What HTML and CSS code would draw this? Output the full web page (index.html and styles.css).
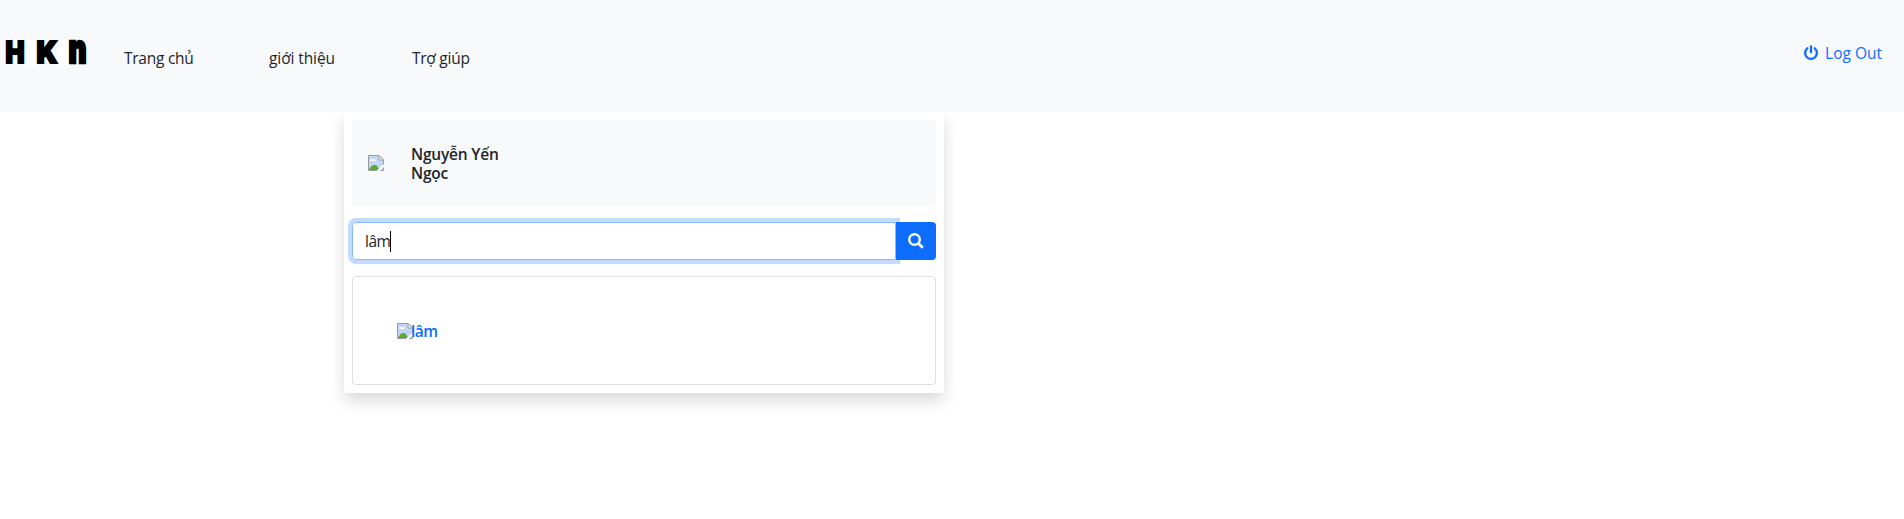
FILE: index.html
```html
<!DOCTYPE html>
<html lang="vi">
<head>
<meta charset="utf-8">
<title>HKN</title>
<link rel="stylesheet" href="styles.css">
</head>
<body>
<svg class="defs" width="0" height="0" aria-hidden="true">
  <symbol id="broken" viewBox="0 0 16 16">
    <path d="M.5.5H11l4.500 4.500V15.500H.5Z" fill="#c3d6f5" stroke="#9a9a9a"/>
    <path d="M2.500 6c0-2 2-2.500 3-1.500C7 4 8 5 7.500 6Z" fill="#fff"/>
    <path d="M1 15c1-3 3-5 5.500-5S10 12 11 15Z" fill="#56ad32"/>
    <path d="M9.500 16.500l7-6.500" stroke="#fff" stroke-width="2.200"/>
    <path d="M11 .5V5h4.500Z" fill="#fff" stroke="#9a9a9a"/>
  </symbol>
</svg>
<header class="navbar">
  <a class="brand" href="#">
    <svg class="logo" width="80" height="25" viewBox="0 0 80 25" role="img" aria-label="HKN">
      <rect x="18" width="13" height="25" fill="#fff"/>
      <rect x="51" width="12" height="25" fill="#fff"/>
      <text class="logo-letter" transform="translate(0 23) scale(1 1.260)" x="-.5" textLength="19" lengthAdjust="spacingAndGlyphs">H</text>
      <text class="logo-letter" transform="translate(0 23) scale(1 1.260)" x="30.500" textLength="21" lengthAdjust="spacingAndGlyphs">K</text>
      <text class="logo-letter" transform="translate(0 23) scale(1 1.640)" x="62.500" textLength="18" lengthAdjust="spacingAndGlyphs">n</text>
    </svg>
  </a>
  <nav class="menu">
    <a class="link-home" href="#">Trang chủ</a>
    <a class="link-about" href="#">giới thiệu</a>
    <a class="link-help" href="#">Trợ giúp</a>
  </nav>
  <a class="logout" href="#">
    <svg width="16" height="16" viewBox="0 0 16 16" fill="none" stroke="currentColor" stroke-width="2.300" stroke-linecap="round">
      <path d="M4.300 3.300a5.900 5.900 0 1 0 7.400 0"/><path d="M8 1.300v6"/>
    </svg>
    <span>Log Out</span>
  </a>
</header>
<main class="panel">
  <section class="profile">
    <svg class="photo" width="16" height="16"><use href="#broken"/></svg>
    <h1 class="name">Nguyễn Yến<br>Ngọc</h1>
  </section>
  <form class="search">
    <div class="field"><span>lâm</span><i class="caret"></i></div>
    <button class="submit" type="button" aria-label="Search">
      <svg width="16" height="16" viewBox="0 0 16 16" fill="none" stroke="#fff">
        <circle cx="6.500" cy="6.500" r="5.300" stroke-width="2.400"/><path d="M10.500 10.500l4.300 4.300" stroke-width="2.800"/>
      </svg>
    </button>
  </form>
  <a class="result" href="#">
    <svg class="photo" width="16" height="16"><use href="#broken"/></svg>
    <strong class="result-name">lâm</strong>
  </a>
</main>
</body>
</html>
```
FILE: styles.css
```css
* { box-sizing: border-box; }
body {
  margin: 0;
  min-height: 100vh;
  background: #fff;
  color: #212529;
  font: 15.5px/24px "Open Sans", "Noto Sans", sans-serif;
  letter-spacing: -0.25px;
}
a { color: inherit; text-decoration: none; }
svg { display: block; flex: none; }
.defs { display: none; }
.navbar {
  position: relative;
  z-index: 1;
  height: 112px;
  display: flex;
  align-items: flex-start;
  padding: 40px 22px 0 6px;
  background: #f8f9fb;
}
.logo { overflow: visible; }
.logo-letter {
  font: 900 24px "Inter", "Roboto", sans-serif;
  letter-spacing: 0;
  fill: #000;
  stroke: #000;
  stroke-width: 1.6px;
}
.menu { display: flex; margin-left: 38px; padding-top: 6px; white-space: nowrap; }
.link-home { width: 145px; }
.link-about { width: 143px; letter-spacing: -0.1px; }
.logout {
  display: flex;
  gap: 6px;
  margin-left: auto;
  padding-top: 1px;
  color: #0d6efd;
  white-space: nowrap;
  letter-spacing: 0;
}
.logout svg { margin-top: 4px; }
.panel {
  width: 600px;
  height: 281px;
  margin-left: 344px;
  padding: 8px;
  border-radius: 4px;
  background: #fff;
  box-shadow: 0 8px 16px rgba(0, 0, 0, .15);
}
.profile {
  display: flex;
  height: 86px;
  padding: 22px 16px;
  background: #f8f9fb;
}
.profile .photo { margin-top: 13px; }
.name {
  margin: 3px 0 0 27px;
  font-size: 15.5px;
  line-height: 19px;
  font-weight: 600;
  letter-spacing: -0.2px;
}
.search { display: flex; height: 38px; margin: 16px 0; }
.field {
  flex: 1;
  display: flex;
  align-items: center;
  padding-left: 12px;
  border: 1px solid #86b7fe;
  border-radius: 4px 0 0 4px;
  box-shadow: 0 0 0 4px rgba(13, 110, 253, .25);
  letter-spacing: -0.5px;
}
.caret { width: 1px; height: 21px; background: #000; }
.submit {
  position: relative;
  width: 40px;
  display: grid;
  place-items: center;
  padding: 0;
  border: 0;
  border-radius: 0 4px 4px 0;
  background: #0d6efd;
}
.result {
  display: flex;
  height: 109px;
  padding: 46px 44px;
  border: 1px solid #dfdfdf;
  border-radius: 4px;
  color: #0d6efd;
}
.result-name { margin: -4px 0 0 -2px; font-weight: 600; letter-spacing: -0.5px; }
```
